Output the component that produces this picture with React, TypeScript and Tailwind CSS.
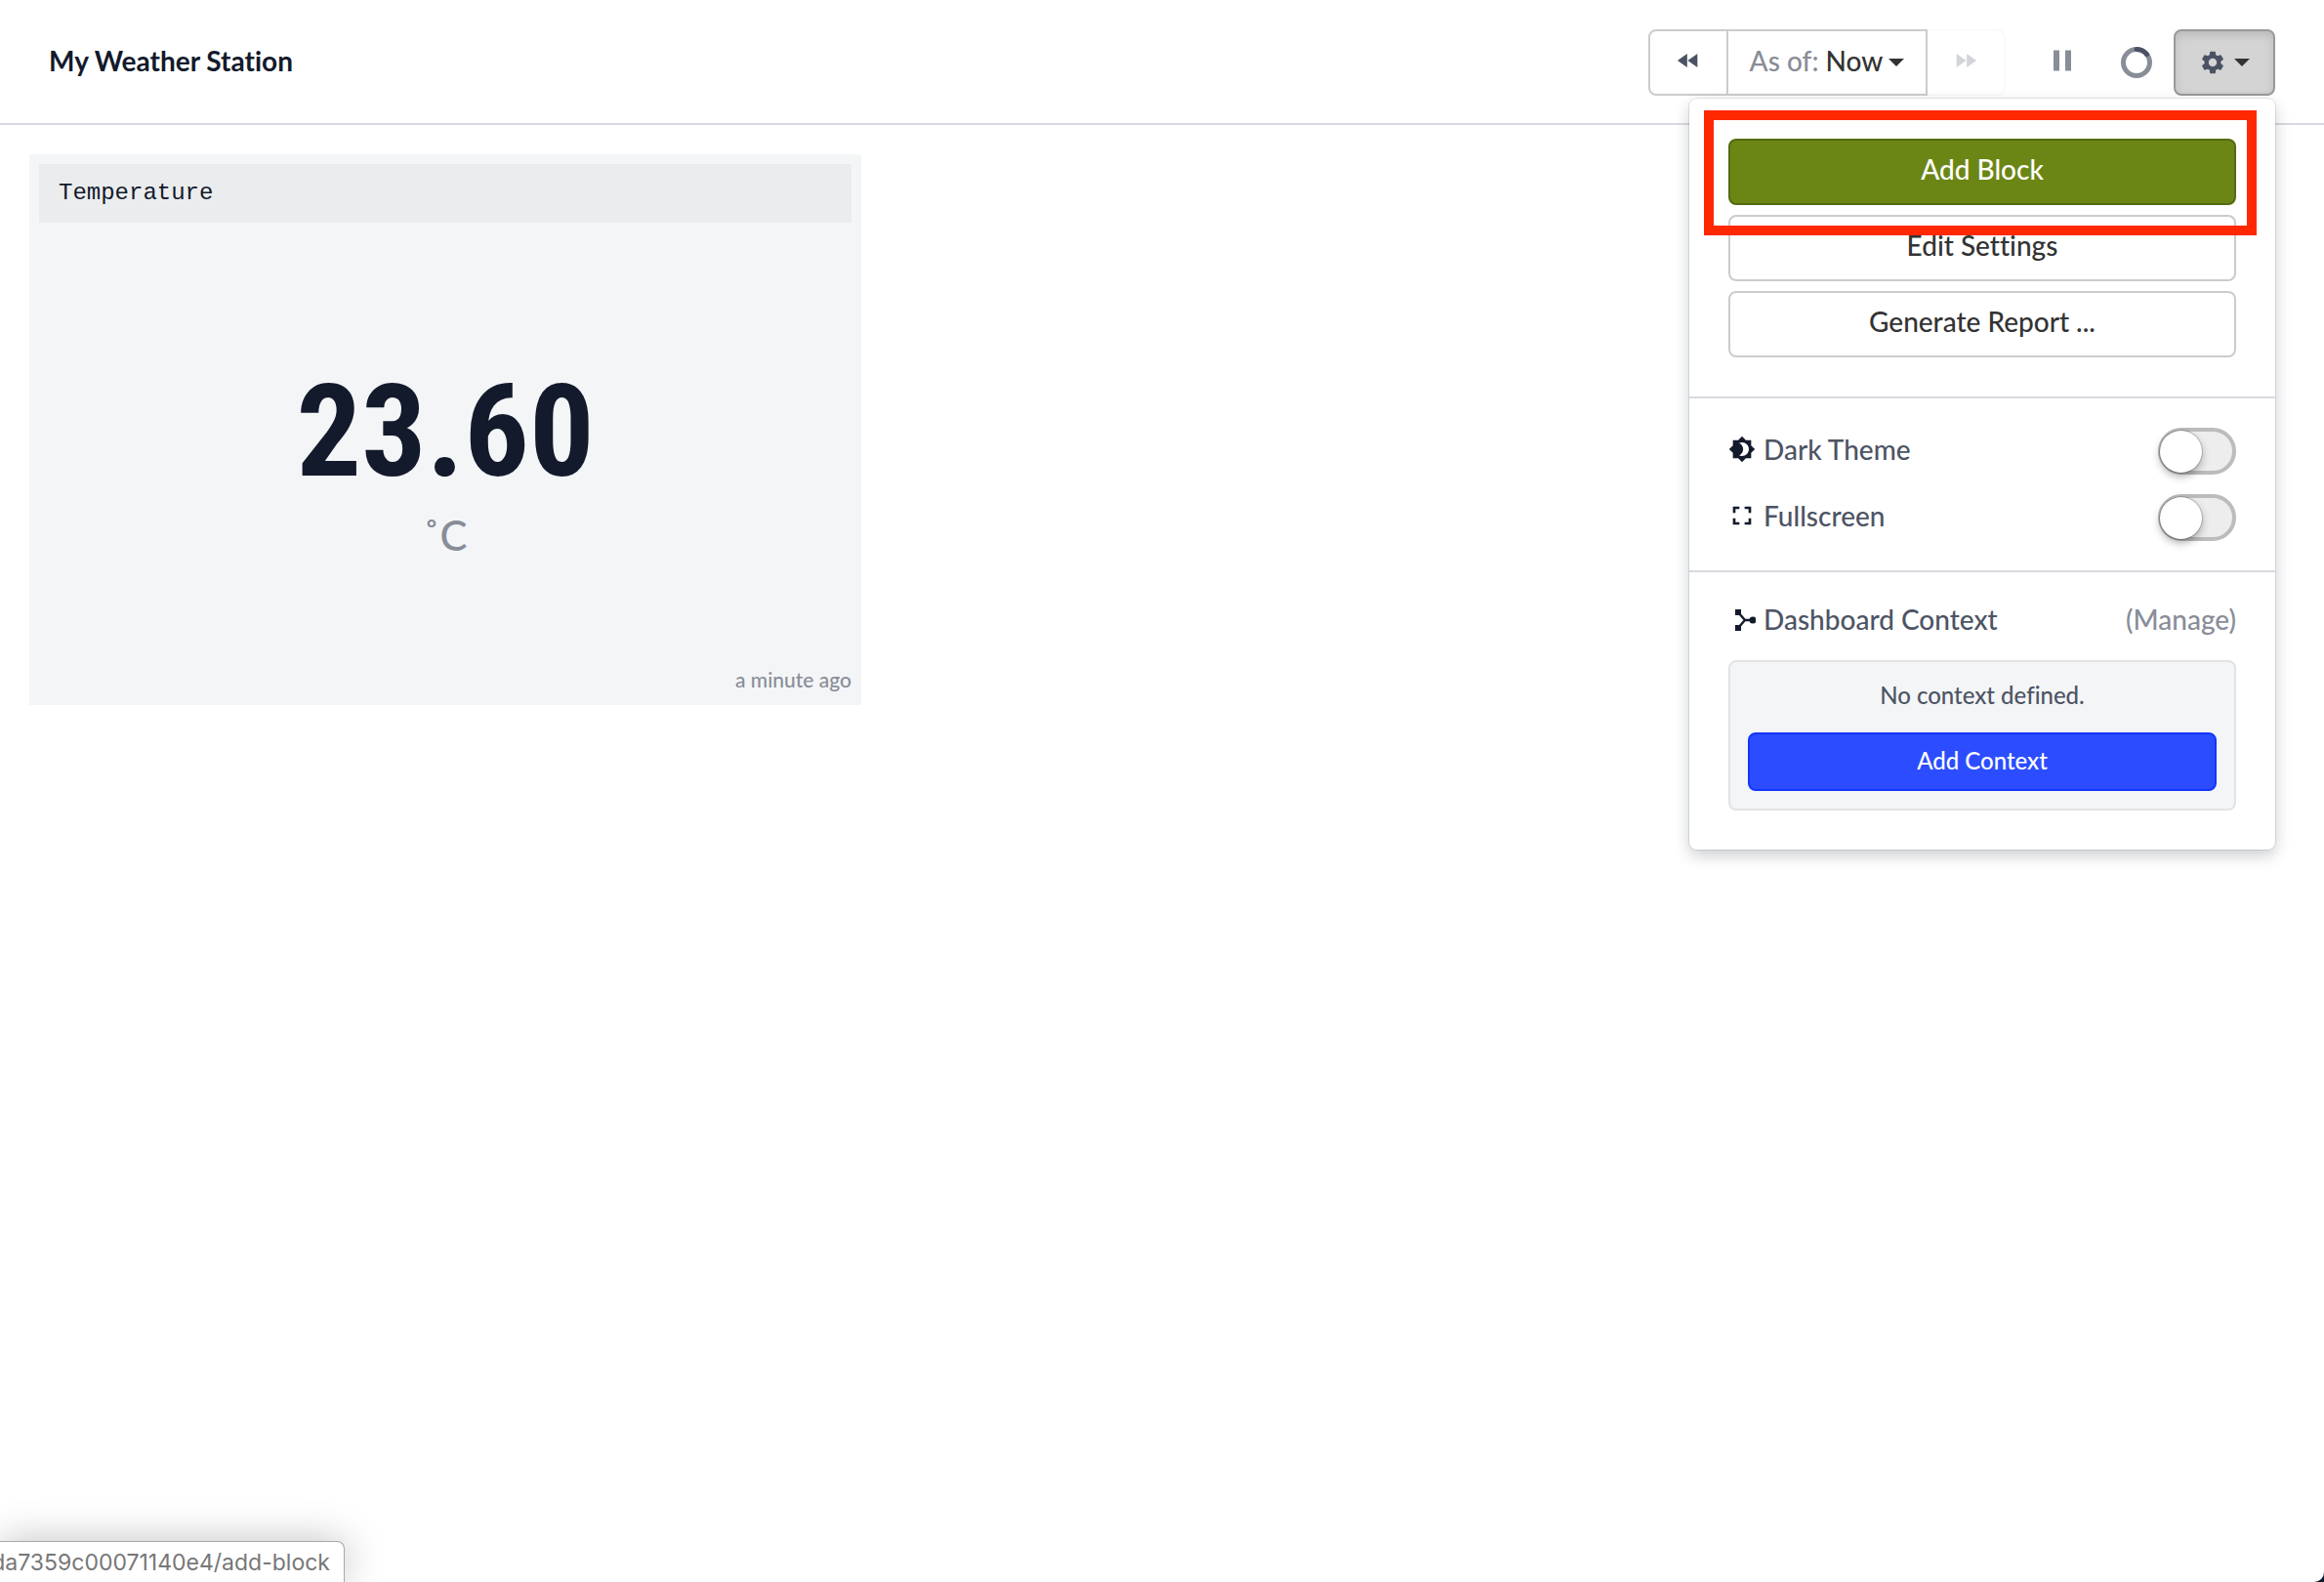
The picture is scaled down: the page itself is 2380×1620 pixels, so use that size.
import { useState } from 'react';
import type { ReactNode } from 'react';
import {
  MdBrightness4,
  MdFastForward,
  MdFastRewind,
  MdFullscreen,
  MdPause,
  MdSettings,
} from 'react-icons/md';

function Caret() {
  return <span className="border-x-8 border-t-8 border-x-transparent border-t-[#333333]" />;
}

function Spinner() {
  return (
    <svg className="size-8" viewBox="0 0 32 32" fill="none" strokeWidth="5">
      <circle cx="16" cy="16" r="13.5" stroke="#888d98" />
      <path d="M16 2.5A13.5 13.5 0 0 1 26.5 7.6" stroke="#4a5263" strokeLinecap="round" />
    </svg>
  );
}

function ContextIcon() {
  return (
    <svg className="size-7" viewBox="0 0 28 28" fill="#131a2c">
      <path d="M7 4h6v6H7zM7 20h6v6H7z" />
      <circle cx="25" cy="15" r="3.5" />
      <path d="M10 7l7 8-7 8M17 15h7" fill="none" stroke="#131a2c" strokeWidth="2.4" />
    </svg>
  );
}

function MenuButton({ children, className = '' }: { children: ReactNode; className?: string }) {
  return (
    <button
      type="button"
      className={`h-[68px] w-full rounded-lg border-2 pb-[6px] text-[28px] font-medium ${className}`}
    >
      {children}
    </button>
  );
}

interface SwitchRowProps {
  id: string;
  label: string;
  icon: ReactNode;
}

function SwitchRow({ id, label, icon }: SwitchRowProps) {
  const [checked, setChecked] = useState(false);

  return (
    <div className="flex h-12 items-center justify-between">
      <label htmlFor={id} className="flex items-center gap-2 pb-1 font-medium text-[#4d5464]">
        <span className="flex w-7 justify-center text-[#131a2c]">{icon}</span>
        {label}
      </label>
      <span className="relative h-12 w-20">
        <input
          id={id}
          type="checkbox"
          role="switch"
          checked={checked}
          onChange={(event) => setChecked(event.target.checked)}
          className="peer h-12 w-20 appearance-none rounded-full border-4 border-[#bcbcbc] bg-[#ededed] checked:bg-[#2b4dff]"
        />
        <span className="pointer-events-none absolute left-[2px] top-[3px] size-[43px] rounded-full bg-white shadow-[0_0_0_1px_#00000030,0_4px_8px_#00000050] peer-checked:left-[35px]" />
      </span>
    </div>
  );
}

function SettingsMenu() {
  return (
    <div className="absolute right-0 top-[71px] z-10 w-[600px] rounded-lg bg-white text-[28px] leading-8 shadow-[0_0_0_1px_#131a2c18,0_6px_16px_#131a2c38]">
      <div className="flex flex-col gap-[10px] border-b-2 border-[#d9dae0] px-10 pb-10 pt-[41px]">
        <div className="relative">
          <MenuButton className="border-[#536b10] bg-[#6b8615] text-white">Add Block</MenuButton>
          <span className="pointer-events-none absolute -bottom-[31px] -left-[25px] -right-[21px] -top-[29px] border-10 border-[#ff2800]" />
        </div>
        <MenuButton className="border-[#cccccc] bg-white text-[#333333]">Edit Settings</MenuButton>
        <MenuButton className="border-[#cccccc] bg-white text-[#333333]">Generate Report ...</MenuButton>
      </div>

      <div className="flex flex-col gap-5 border-b-2 border-[#d9dae0] px-10 py-[30px]">
        <SwitchRow id="dark-theme" label="Dark Theme" icon={<MdBrightness4 className="size-7 shrink-0" />} />
        <SwitchRow id="fullscreen" label="Fullscreen" icon={<MdFullscreen className="size-8 shrink-0" />} />
      </div>

      <div className="px-10 pb-10 pt-8">
        <div className="flex items-center justify-between font-medium">
          <span className="flex items-center gap-2 text-[#4d5464]">
            <ContextIcon />
            Dashboard Context
          </span>
          <a href="#manage" className="text-[#888d98]">(Manage)</a>
        </div>
        <div className="mt-[26px] rounded-lg border-2 border-[#e2e3e5] bg-[#f4f5f7] p-[18px] text-center text-[24px] font-medium">
          <p className="mb-[22px] leading-8 text-[#4d5464]">No context defined.</p>
          <button type="button" className="h-[60px] w-full rounded-lg border-2 border-[#1236ff] bg-[#2b4dff] pb-[2px] text-white">
            Add Context
          </button>
        </div>
      </div>
    </div>
  );
}

function Header() {
  return (
    <header className="flex h-32 items-start justify-between border-b-2 border-[#d9dae0] px-[50px] pt-[30px]">
      <h1 className="text-[28px] font-bold leading-[64px]">My Weather Station</h1>
      <div className="relative flex h-[68px] items-center">
        <button type="button" aria-label="Rewind" className="flex h-[68px] w-[82px] items-center justify-center rounded-l-lg border-2 border-[#cccccc] pb-1 text-[#4a5263]">
          <MdFastRewind className="size-7" />
        </button>
        <button type="button" className="-ml-[2px] flex h-[68px] w-[206px] items-center justify-center gap-[6px] border-2 border-[#cccccc] text-[28px] font-medium text-[#333333]">
          <span className="pb-1">
            <span className="text-[#888d98]">As of:</span> Now
          </span>
          <Caret />
        </button>
        <button type="button" disabled aria-label="Fast forward" className="-ml-[2px] flex h-[68px] w-[82px] items-center justify-center rounded-r-lg border-2 border-[#cccccc]/10 pb-1 text-[#d2d4d8]">
          <MdFastForward className="size-7" />
        </button>
        <button type="button" aria-label="Pause" className="ml-10 flex size-9 items-center justify-center pb-1 text-[#888d98]">
          <MdPause className="size-9 shrink-0" />
        </button>
        <span className="ml-[42px]">
          <Spinner />
        </span>
        <button type="button" aria-label="Settings" className="ml-[22px] flex h-[68px] w-[104px] items-center justify-center gap-2 rounded-lg border-2 border-[#999999] bg-[#d4d4d4] text-[#4a5263] shadow-[inset_0_4px_10px_#00000020]">
          <MdSettings className="size-7" />
          <Caret />
        </button>
        <SettingsMenu />
      </div>
    </header>
  );
}

function ValueBlock() {
  return (
    <section className="flex h-[564px] w-[852px] flex-col bg-[#f4f5f7] p-[10px]">
      <h2 className="flex h-[60px] items-center bg-[#ebeced] px-5 font-['Liberation_Mono',monospace] text-[24px] font-medium">
        Temperature
      </h2>
      <div className="flex flex-1 flex-col items-center justify-center pt-9">
        <div className="font-['Roboto_Condensed','Roboto',sans-serif] text-[132px] font-bold leading-[140px]">
          23.60
        </div>
        <div className="mt-3 text-[42px] font-medium leading-12 text-[#888d98]">˚C</div>
      </div>
      <div className="text-right text-[21px] font-medium leading-8 text-[#888d98]">a minute ago</div>
    </section>
  );
}

export default function App() {
  return (
    <div className="bg-[#0b1830] font-['Lato','Fira_Sans',sans-serif] text-[#131a2c] [font-variant-ligatures:none]">
      <div className="relative min-h-screen overflow-hidden rounded-br-[10px] bg-white">
        <Header />
        <main className="p-[30px]">
          <ValueBlock />
        </main>
        <div className="absolute bottom-0 left-0 flex h-[42px] w-[353px] justify-end whitespace-nowrap rounded-tr-lg border-r border-t border-[#a8a8a8] bg-white pr-[14px] font-['Inter',sans-serif] text-[23px] leading-[42px] text-[#777777] shadow-[0_0_40px_#00000040]">
          da7359c00071140e4/add-block
        </div>
      </div>
    </div>
  );
}
